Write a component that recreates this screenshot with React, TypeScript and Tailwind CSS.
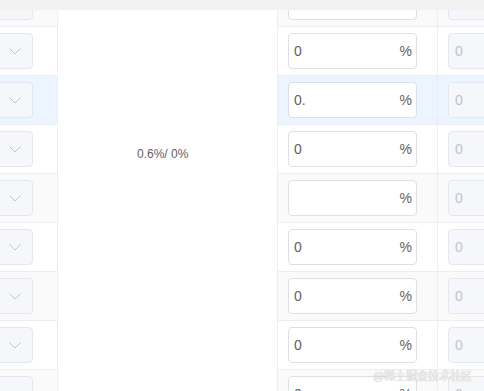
const rows = ["", "0", "0.", "0", "", "0", "0", "0", "0"]

const rowBg = (i: number) => {
  if (i === 2) return "bg-[#ecf5ff]"
  return i % 2 === 0 ? "bg-[#fafafa]" : "bg-white"
}

const SelectBox = () => (
  <div className="ml-[-50px] flex h-[36px] w-[83px] items-center justify-end rounded-[4px] border border-[#e4e7ed] bg-[#f5f7fa] pr-[11px]">
    <svg width="12" height="7" viewBox="0 0 12 7" fill="none" className="text-[#c0c4cc]">
      <polyline points="0.5,0.5 6,6 11.5,0.5" stroke="currentColor" strokeWidth="1" />
    </svg>
  </div>
)

const PercentInput = ({ value }: { value: string }) => (
  <div className="flex h-[36px] w-[129px] items-center justify-between rounded-[4px] border border-[#dcdfe6] bg-white pl-[5px] pr-[4px] pt-[1px] text-[14px] text-[#606266]">
    <span>{value}</span>
    <span>%</span>
  </div>
)

const DisabledInput = () => (
  <div className="flex h-[36px] w-[80px] shrink-0 items-center rounded-[4px] border border-[#e4e7ed] bg-[#f5f7fa] pl-[6px] pt-[1px] text-[14px] text-[#c0c4cc]">
    0
  </div>
)

export default function App() {
  return (
    <div className="relative h-[391px] w-[484px] overflow-hidden bg-white font-['Liberation_Sans',Arial,sans-serif]">
      <div className="h-[10px] bg-[#f2f2f2]" />
      <div className="h-[381px] overflow-hidden">
        <div className="mt-[-32px] flex">
          {/* select column */}
          <div className="w-[58px] shrink-0 overflow-hidden border-r border-[#ebeef5]">
            {rows.map((_, i) => (
              <div key={i} className={`flex h-[49px] items-center border-b border-[#ebeef5] ${rowBg(i)}`}>
                <SelectBox />
              </div>
            ))}
          </div>

          {/* merged cell */}
          <div className="w-[220px] shrink-0 border-r border-[#ebeef5] bg-white pl-[79px] pt-[168px] text-[12px] leading-[16px] text-[#606266]">
            0.6%/ 0%
          </div>

          {/* inputs */}
          <div className="min-w-0 flex-1 overflow-hidden">
            {rows.map((v, i) => (
              <div key={i} className={`flex h-[49px] border-b border-[#ebeef5] ${rowBg(i)}`}>
                <div className="flex w-[160px] shrink-0 items-center border-r border-[#ebeef5] pl-[10px]">
                  <PercentInput value={v} />
                </div>
                <div className="flex items-center pl-[10px]">
                  <DisabledInput />
                </div>
              </div>
            ))}
          </div>
        </div>
      </div>

      <div className="absolute bottom-[9px] right-[12px] font-['Noto_Sans_CJK_SC',sans-serif] text-[11px] leading-[13px] text-[#f4f4f4] [text-shadow:0_0_1px_#9a9a9a]">
        @稀土掘金技术社区
      </div>
    </div>
  )
}
